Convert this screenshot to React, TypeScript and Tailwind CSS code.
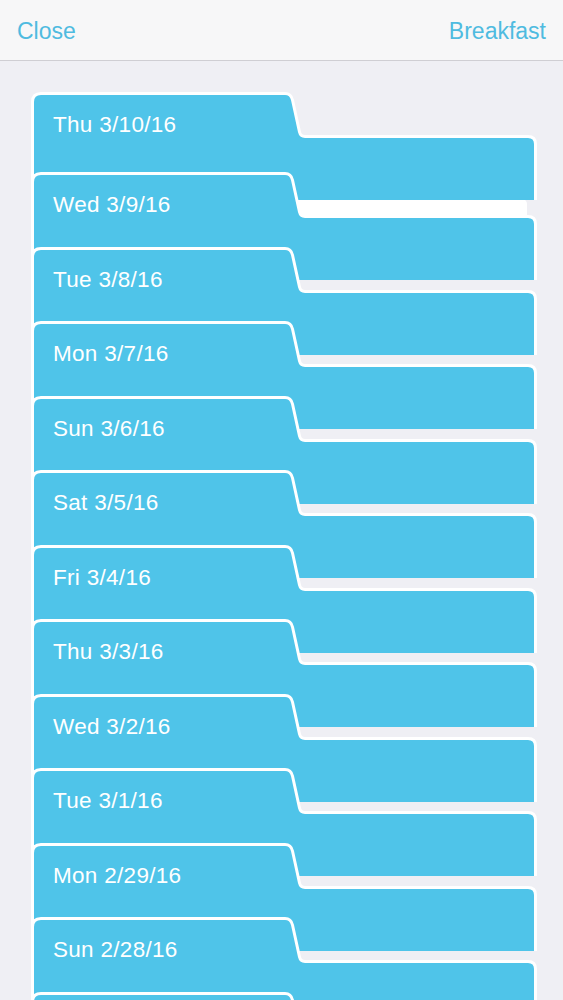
const DAYS = [
  'Thu 3/10/16',
  'Wed 3/9/16',
  'Tue 3/8/16',
  'Mon 3/7/16',
  'Sun 3/6/16',
  'Sat 3/5/16',
  'Fri 3/4/16',
  'Thu 3/3/16',
  'Wed 3/2/16',
  'Tue 3/1/16',
  'Mon 2/29/16',
  'Sun 2/28/16',
]

export default function App() {
  return (
    <div
      className="h-screen overflow-hidden bg-[#efeff4]"
      style={{ fontFamily: '"Liberation Sans", Arial, sans-serif' }}
    >
      <header className="flex h-[61px] items-center justify-between border-b border-[#cfced3] bg-[#f7f7f8] px-[17px] pt-[2px] text-[23px] text-[#4fbbe0]">
        <span>Close</span>
        <span>Breakfast</span>
      </header>

      <div className="pt-[31px]">
        {DAYS.map((d, i) => (
          <Folder key={d} label={d} first={i === 0} second={i === 1} />
        ))}
        {/* next folder, only its tab edge is on screen */}
        <Folder label="" />
      </div>
    </div>
  )
}

function Folder({ label, first, second }: { label: string; first?: boolean; second?: boolean }) {
  return (
    <div
      className={
        'relative ml-[31px] h-[108px] w-[506px] ' +
        (first ? '' : second ? 'mt-[-28px]' : 'mt-[-33.5px]')
      }
    >
      {/* paper peeking out of the top folder */}
      {first && (
        <div className="absolute left-0 top-[107px] h-[22px] w-[496px] rounded-tr-[5px] bg-white" />
      )}
      <svg
        className="absolute inset-0 h-full w-full overflow-visible"
        viewBox="0 0 506 108"
        aria-hidden
      >
        <path
          d="M1.5 108 V10 Q1.5 1.5 10 1.5 H254 Q260 1.5 261.5 8 L268.5 40 Q269.5 44.5 274 44.5 H497 Q504.5 44.5 504.5 52 V108"
          fill="#4fc4e9"
          stroke="#ffffff"
          strokeWidth="3"
        />
      </svg>
      {label && (
        <div className="relative pl-[22px] pt-[20px] text-[22.5px] leading-[26px] tracking-[0.3px] text-white">
          {label}
        </div>
      )}
    </div>
  )
}
